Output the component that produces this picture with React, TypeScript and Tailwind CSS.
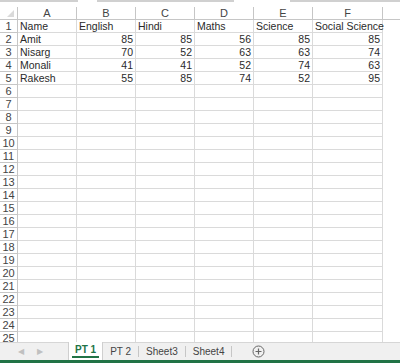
import React from 'react';

const COLS = [
  { label: 'A', w: 59 },
  { label: 'B', w: 59 },
  { label: 'C', w: 59 },
  { label: 'D', w: 59 },
  { label: 'E', w: 59 },
  { label: 'F', w: 70 },
];

const DATA: (string | number)[][] = [
  ['Name', 'English', 'Hindi', 'Maths', 'Science', 'Social Science'],
  ['Amit', 85, 85, 56, 85, 85],
  ['Nisarg', 70, 52, 63, 63, 74],
  ['Monali', 41, 41, 52, 74, 63],
  ['Rakesh', 55, 85, 74, 52, 95],
];

const TABS = ['PT 1', 'PT 2', 'Sheet3', 'Sheet4'];

export default function App() {
  const rows = Array.from({ length: 25 }, (_, i) => i + 1);

  return (
    <div
      className="w-[400px] h-[363px] bg-white flex flex-col overflow-hidden text-[10.5px] text-[#2a2a2a]"
      style={{ fontFamily: '"Liberation Sans", Arial, sans-serif' }}
    >
      {/* bottom edge of the formula bar */}
      <div className="h-[7px] flex items-start shrink-0">
        <div className="h-[2px] w-[78px] bg-[#d0d0d0]" />
        <div className="h-[2px] w-[19px]" />
        <div className="h-[2px] w-[137px] bg-[#d0d0d0]" />
        <div className="h-[2px] w-[56px]" />
        <div className="h-[2px] flex-1 bg-[#d0d0d0]" />
      </div>

      {/* Grid */}
      <div className="flex-1 min-h-0 overflow-hidden">
        {/* column headers */}
        <div className="flex h-[13px] leading-[12px] text-[11px]">
          <div className="w-[18px] shrink-0 border-r border-b border-[#c6c6c6] relative">
            <div className="absolute right-[3px] bottom-[2px] w-0 h-0 border-l-[7px] border-l-transparent border-b-[7px] border-b-[#dadada]" />
          </div>
          {COLS.map((c) => (
            <div
              key={c.label}
              style={{ width: c.w }}
              className="shrink-0 border-r border-b border-[#c6c6c6] text-center text-[#444]"
            >
              {c.label}
            </div>
          ))}
          <div className="flex-1 border-b border-[#c6c6c6]" />
        </div>

        {rows.map((r) => {
          const data = DATA[r - 1];
          return (
            <div key={r} className="flex h-[13px] leading-[12px]">
              <div className="w-[18px] shrink-0 border-r border-b border-[#c6c6c6] text-center text-[#444] text-[11px]">
                {r}
              </div>
              {COLS.map((c, ci) => {
                const v = data ? data[ci] : '';
                const isNum = typeof v === 'number';
                return (
                  <div
                    key={c.label}
                    style={{ width: c.w }}
                    className={`shrink-0 border-r border-b border-[#dadada] whitespace-nowrap ${
                      isNum ? 'text-right pr-[2px]' : 'text-left pl-[2px]'
                    }`}
                  >
                    {v}
                  </div>
                );
              })}
              <div className="flex-1" />
            </div>
          );
        })}
      </div>

      {/* Sheet tabs */}
      <div className="h-[18px] shrink-0 bg-[#f0f0f0] border-t border-[#d6d6d6] flex items-stretch text-[10px] text-[#444]">
        <div className="w-[68px] flex items-center pl-[18px] gap-[13px] text-[#c0c0c0] text-[8px]">
          <span>◀</span>
          <span>▶</span>
        </div>
        {TABS.map((t, i) => (
          <div key={t} className="flex items-stretch">
            {i === 0 ? (
              <div className="-mt-px bg-white border-l border-r border-[#cfcfcf] px-[3px] flex flex-col items-center justify-center">
                <span className="font-bold text-[#217346] leading-[12px] px-[3px] border-b-2 border-[#217346]">
                  {t}
                </span>
              </div>
            ) : (
              <div className="flex items-center px-[7px]">{t}</div>
            )}
            {i > 0 && <div className="w-px my-[3px] bg-[#c6c6c6]" />}
          </div>
        ))}
        <div className="flex items-center pl-[20px]">
          <svg width="13" height="13" viewBox="0 0 13 13">
            <circle cx="6.5" cy="6.5" r="5.5" fill="none" stroke="#666" strokeWidth="1" />
            <path d="M6.5 3.5v6M3.5 6.5h6" stroke="#666" strokeWidth="1.2" />
          </svg>
        </div>
      </div>
      <div className="h-[3px] shrink-0 bg-[#217346]" />
    </div>
  );
}
